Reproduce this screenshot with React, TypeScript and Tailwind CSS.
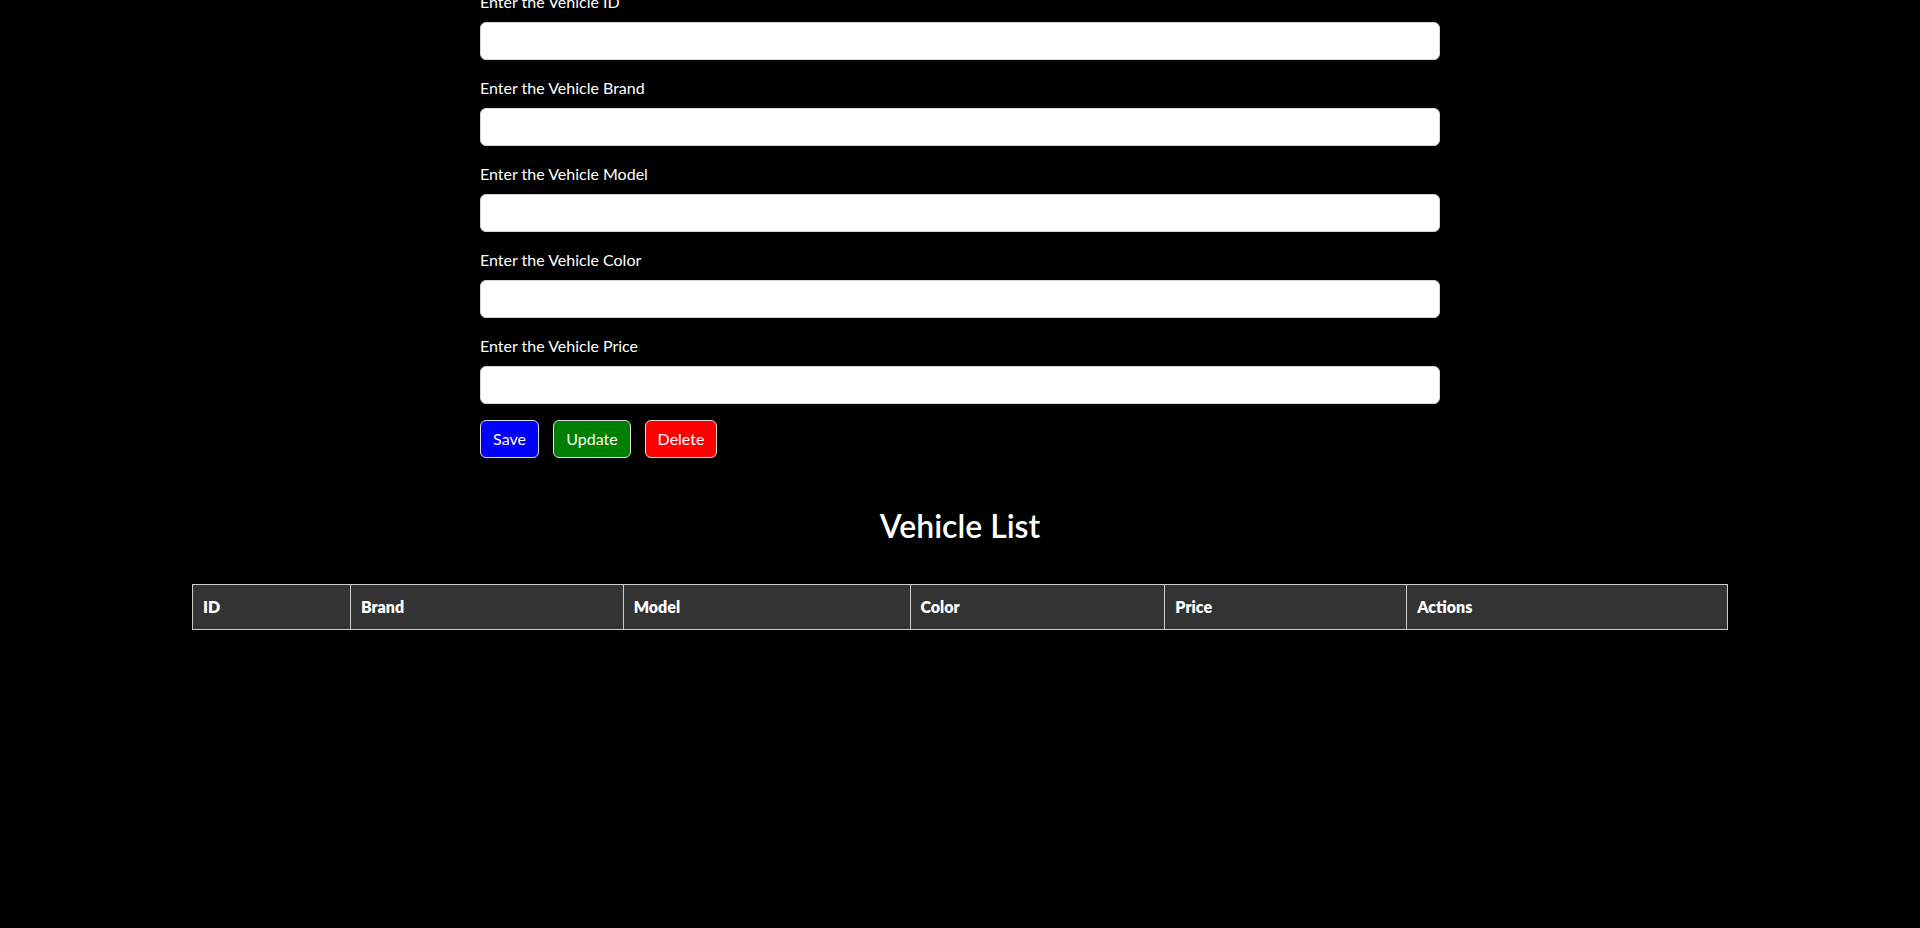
const fields = ["ID", "Brand", "Model", "Color", "Price"];

const columns = [
  { label: "ID", w: "w-[158px]" },
  { label: "Brand", w: "w-[273px]" },
  { label: "Model", w: "w-[287px]" },
  { label: "Color", w: "w-[255px]" },
  { label: "Price", w: "w-[242px]" },
  { label: "Actions", w: "w-[321px]" },
];

export default function App() {
  return (
    <div className="min-h-[928px] bg-black text-white [font-family:Lato,'Noto_Sans',sans-serif] overflow-hidden">
      {/* Vehicle form */}
      <div className="w-[960px] mx-auto -mt-[10px]">
        {fields.map((f) => (
          <div key={f} className="mb-4">
            <label className="block text-[16px] leading-6 mb-2">Enter the Vehicle {f}</label>
            <input
              type="text"
              className="block w-full h-[38px] rounded-[6px] border border-[#ced4da] bg-white px-3 text-black outline-none"
            />
          </div>
        ))}
        <div className="flex gap-[14px]">
          <button className="h-[38px] w-[59px] rounded-[6px] border border-[#dddddd] bg-[#0000ff] text-[16px]">Save</button>
          <button className="h-[38px] w-[78px] rounded-[6px] border border-[#dddddd] bg-[#008000] text-[16px]">Update</button>
          <button className="h-[38px] w-[72px] rounded-[6px] border border-[#dddddd] bg-[#ff0000] text-[16px]">Delete</button>
        </div>
      </div>

      <h2 className="mt-[49px] text-center text-[32px] leading-[38px] font-semibold">Vehicle List</h2>

      {/* Vehicle table */}
      <div className="w-[1536px] mx-auto mt-[39px]">
        <table className="w-full border-collapse">
          <thead>
            <tr className="bg-[#333333]">
              {columns.map((c) => (
                <th
                  key={c.label}
                  className={`${c.w} h-[45px] border border-[#cccccc] px-[10px] text-left text-[16px] font-extrabold`}
                >
                  {c.label}
                </th>
              ))}
            </tr>
          </thead>
          <tbody />
        </table>
      </div>
    </div>
  );
}
